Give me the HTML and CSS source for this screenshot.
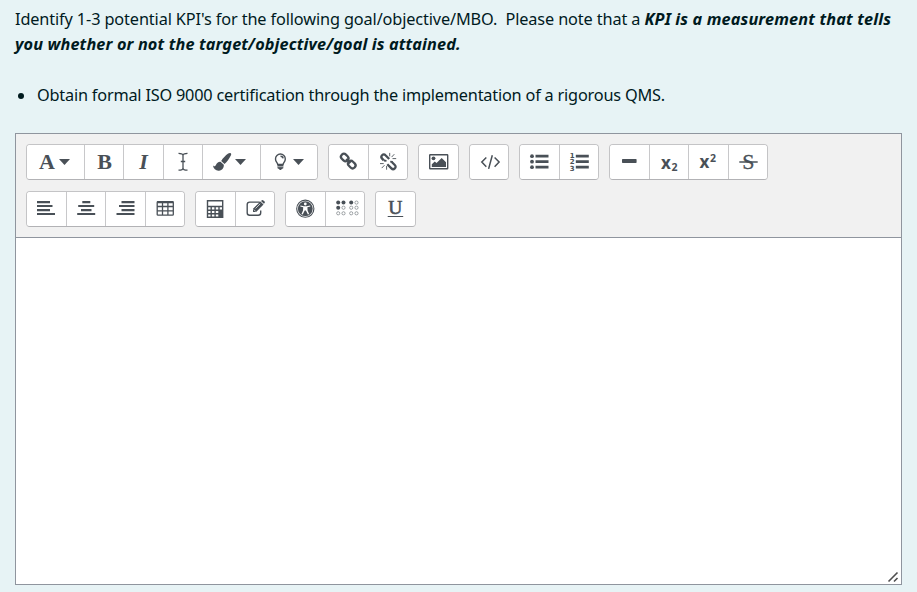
FILE: index.html
```html
<!DOCTYPE html>
<html lang="en">
<head>
<meta charset="utf-8">
<title>KPI question</title>
<link rel="stylesheet" href="styles.css">
</head>
<body>
<main class="question">
  <p class="prompt"><span class="lead">Identify 1-3 potential KPI's for the following goal/objective/MBO.&nbsp; Please note that a </span><strong class="key1">KPI is a measurement that tells</strong><br><strong class="key2">you whether or not the target/objective/goal is attained.</strong></p>
  <ul class="goals"><li><span class="goal">Obtain formal ISO 9000 certification through the implementation of a rigorous QMS.</span></li></ul>
  <section class="editor">
    <div class="toolbar">
      <div class="row">
        <div class="group">
          <button class="wide" aria-label="Paragraph styles"><svg viewBox="0 0 57 34"><text class="serif" x="20" y="24" font-size="22">A</text><path d="M32 14h11l-5.500 6z"/></svg></button>
          <button aria-label="Bold"><svg viewBox="0 0 38 34"><text class="serif" x="19.500" y="24" font-size="22">B</text></svg></button>
          <button aria-label="Italic"><svg viewBox="0 0 38 34"><text class="serif italic" x="19.500" y="24" font-size="22">I</text></svg></button>
          <button aria-label="Font size"><svg viewBox="0 0 38 34"><path class="line" stroke-width="1.300" d="M14.500 8.300c3 0 4.500.7 4.500 2.200v12.500c0 1.500-1.500 2.200-4.500 2.200M23.500 8.300c-3 0-4.500.7-4.500 2.200M23.500 25.200c-3 0-4.500-.7-4.500-2.200M16.800 16.500h4.400"/></svg></button>
          <button class="wide" aria-label="Font color"><svg viewBox="0 0 57 34"><path d="M27.700 8.200c.8.700.5 1.600 0 2.500-1.600 3.100-3.600 6.100-6.200 8.300l-3.300-2.900c1.700-3 4.300-5.500 7-7.500.9-.7 1.800-1 2.500-.4zM17.500 16.800l3.300 3c.3 3-1.500 5.600-4.800 5.900-3 .3-5.500-1.600-6-5.100 1.200.8 2.100 1.100 2.900-.7.800-1.900 2.500-3.300 4.600-3.100z"/><path d="M32 14h11l-5.500 6z"/></svg></button>
          <button class="wide" aria-label="Background color"><svg viewBox="0 0 57 34"><path class="line" stroke-width="1.400" d="M16.700 19.500c-.1-1.900-2.200-2.700-2.200-5.600a4.900 4.900 0 0 1 9.800 0c0 2.900-2.100 3.700-2.200 5.600zM19.500 11.200c1.400 0 2.500.8 2.600 2.200"/><path d="M16.500 20h5.800v3.300l-1.400.8-1 .9h-1l-1-.9-1.400-.8z"/><path stroke="#fff" stroke-width=".6" d="M16.500 21.700h5.800"/><path d="M32 14h11l-5.500 6z"/></svg></button>
        </div>
        <div class="group">
          <button aria-label="Link"><svg viewBox="0 0 38 34"><g class="line" stroke-width="2.300"><rect x="-4" y="-2.900" width="8" height="5.800" rx="2.800" transform="translate(15.700 12.500) rotate(45)"/><rect x="-4" y="-2.900" width="8" height="5.800" rx="2.800" transform="translate(22.800 19.600) rotate(45)"/><path d="M17.200 14l4.100 4.100"/></g></svg></button>
          <button aria-label="Unlink"><svg viewBox="0 0 38 34"><path class="line" stroke-width="2.300" d="M14.800 15.400l-1.700-1.800c-1.100-1.200-1.100-2.300 0-3.400s2.400-1.100 3.400 0l3.700 3.800M22.800 17l3 3c1.100 1.100 1.100 2.300 0 3.400s-2.300 1.100-3.400 0l-4.100-4.100"/><path class="line" stroke-width=".9" d="M20.700 7.900v3.400M25.300 9.200l-2.700 2.900M27.200 13.600h-3.700M11 18.600h3.700M15.500 20.200l-2.800 2.900M17.600 21v3.700"/><path class="line" stroke-width="1.800" d="M15 15.500l2.500.3M21.200 16.700l2.600.3"/></svg></button>
        </div>
        <div class="group">
          <button aria-label="Image"><svg viewBox="0 0 38 34"><rect class="line" stroke-width="1.400" x="10.700" y="9.700" width="18" height="14" rx=".5"/><circle cx="14.500" cy="13.300" r="1.900"/><path d="M12.800 22v-2.700l3-2.800 1.700 1.600 5.200-5.200 4.300 4.300V22z"/></svg></button>
        </div>
        <div class="group">
          <button aria-label="HTML"><svg viewBox="0 0 38 34"><path class="line" stroke-width="1.500" d="M16.300 12.500l-4.500 4.600 4.500 4.600M24.600 12.500l4.500 4.600-4.500 4.600M22.300 10.200l-3.700 13.700"/></svg></button>
        </div>
        <div class="group">
          <button aria-label="Unordered list"><svg viewBox="0 0 38 34"><circle cx="12" cy="11.200" r="1.900"/><circle cx="12" cy="16.700" r="1.900"/><circle cx="12" cy="22.200" r="1.900"/><path class="line" stroke-width="2.700" d="M15.500 11.200h13M15.500 16.700h13M15.500 22.200h13"/></svg></button>
          <button aria-label="Ordered list"><svg viewBox="0 0 38 34"><g class="digits"><text x="12.200" y="12.500">1</text><text x="12.200" y="19">2</text><text x="12.200" y="25.600">3</text></g><path class="line" stroke-width="2.700" d="M15.800 11.200h13M15.800 16.700h13M15.800 22.200h13"/></svg></button>
        </div>
        <div class="group">
          <button aria-label="Horizontal line"><svg viewBox="0 0 38 34"><rect x="12" y="14" width="14.600" height="4" rx=".7"/></svg></button>
          <button aria-label="Subscript"><svg viewBox="0 0 38 34"><text class="sans" x="16" y="23.500" font-size="17">x</text><text class="sans" x="24.500" y="26" font-size="10.500">2</text></svg></button>
          <button aria-label="Superscript"><svg viewBox="0 0 38 34"><text class="sans" x="15.500" y="22.700" font-size="17">x</text><text class="sans" x="24" y="17" font-size="10.500">2</text></svg></button>
          <button aria-label="Strike through"><svg viewBox="0 0 38 34"><text class="serif regular" x="19.300" y="23.700" font-size="22">S</text><path class="line" stroke-width="1.300" d="M10.300 17h18.400"/></svg></button>
        </div>
      </div>
      <div class="row">
        <div class="group">
          <button aria-label="Align left"><svg viewBox="0 0 38 34"><path class="line" stroke-width="2.200" d="M10 10.200h13M10 14h15.500M10 18.100h13M10 22h18"/></svg></button>
          <button aria-label="Center"><svg viewBox="0 0 38 34"><path class="line" stroke-width="2.200" d="M15.300 10.200h8M11.200 14h16M14 18.100h10.500M10.200 22h18"/></svg></button>
          <button aria-label="Align right"><svg viewBox="0 0 38 34"><path class="line" stroke-width="2.200" d="M15.500 10.200h13M13 14h15.500M15.500 18.100h13M10.500 22h18"/></svg></button>
          <button aria-label="Table"><svg viewBox="0 0 38 34"><path class="line" stroke-width="1.300" d="M12 9.600h14.500q.8 0 .8.800v12q0 .8-.8.800H12q-.8 0-.8-.8v-12q0-.8.800-.8zM11.200 14.500h16M11.200 18.800h16M16.500 10v13M21.900 10v13"/><path d="M11.200 9.300h16v1.900h-16z"/></svg></button>
        </div>
        <div class="group">
          <button aria-label="Equation"><svg viewBox="0 0 38 34"><path class="line" stroke-width="1.400" d="M11.500 8.700h15.200v16.600H11.500zM11.500 14.500h15.200M11.500 18.200h15.200M11.500 21.800h15.200M15.200 14v11.300M19.100 14v11.300M23 14v11.300"/><path d="M23 18.500h3.700v6.800H23z"/></svg></button>
          <button aria-label="Edit"><svg viewBox="0 0 38 34"><path class="line" stroke-width="1.400" d="M24 10.400q-.6-.3-1.300-.3h-9q-2.500 0-2.500 2.500v8.200q0 2.500 2.500 2.500h8.500q2.500 0 2.500-2.500v-2.300"/><path d="M17 20v-3.200l7.400-7.300 3.100 3-7.400 7.500zM25 9l.9-.8q.6-.5 1.200 0l1.500 1.400q.6.700 0 1.400l-.7.800z"/><path stroke="#fff" stroke-width=".7" d="M17.700 17.500l2 2M19.500 16.500l4.700-4.700"/></svg></button>
        </div>
        <div class="group">
          <button aria-label="Accessibility checker"><svg viewBox="0 0 38 34"><circle class="line" stroke-width="1.100" cx="19.300" cy="16.700" r="8.600"/><circle cx="19.300" cy="16.700" r="7.400"/><g fill="#fff"><circle cx="19.300" cy="12" r="1.400"/><path d="M14.500 13.400l3.500.8h2.600l3.500-.8.300 1.100-3 .8.200 3.100 1.500 3.500-1.200.5-2-4h-1.200l-2 4-1.200-.5 1.500-3.500.2-3.100-3-.8z"/></g></svg></button>
          <button aria-label="Screenreader helper"><svg viewBox="0 0 38 34"><g><circle cx="12.200" cy="10.600" r="2"/><circle cx="17.500" cy="10.600" r="2"/><circle cx="12.200" cy="15.700" r="2"/><circle cx="25.200" cy="10.600" r="2"/></g><g class="line" stroke-width=".5"><circle cx="17.500" cy="15.700" r="1.600"/><circle cx="12.200" cy="21.300" r="1.600"/><circle cx="17.500" cy="21.300" r="1.600"/><circle cx="30.500" cy="10.600" r="1.600"/><circle cx="25.200" cy="15.700" r="1.600"/><circle cx="30.500" cy="15.700" r="1.600"/><circle cx="25.200" cy="21.300" r="1.600"/><circle cx="30.500" cy="21.300" r="1.600"/></g></svg></button>
        </div>
        <div class="group">
          <button aria-label="Underline"><svg viewBox="0 0 38 34"><text class="serif underline" x="19.300" y="21.500" font-size="19.500">U</text><path class="line" stroke-width="1.200" d="M11.700 24.500h15.500"/></svg></button>
        </div>
      </div>
    </div>
    <div class="content" contenteditable="true"></div>
    <svg class="grip" viewBox="0 0 12 12"><path d="M1.500 10.500L10.500 1.500M7 10.500L10.500 7"/></svg>
  </section>
</main>
</body>
</html>
```
FILE: styles.css
```css
* { box-sizing: border-box; }
body {
  margin: 0;
  background: #e7f3f5;
  color: #001a1e;
  font: 16.3px/25px "Noto Sans", "Open Sans", sans-serif;
}
.question { padding: 7px 15px 7px; height: 592px; display: flex; flex-direction: column; overflow: hidden; }
.prompt { margin: 0; white-space: nowrap; height: 50px; }
.prompt strong { font-style: italic; }
.lead { letter-spacing: -0.125px; }
.key1 { letter-spacing: 0.13px; }
.key2 { letter-spacing: 0.12px; }
.goals { margin: 26px 0 0; padding: 0 0 0 22px; height: 50px; list-style: none; }
.goals li { white-space: nowrap; display: flex; align-items: center; }
.goals li::before { content: ""; width: 6px; height: 6px; border-radius: 50%; background: #001a1e; margin: 1px 13px 0 -19px; }
.goal { letter-spacing: -0.2px; }
.editor { position: relative; width: 887px; height: 452px; border: 1px solid #8f959e; background: #fff; display: flex; flex-direction: column; }
.toolbar { height: 104px; padding: 10px; background: #f1f1f1; border-bottom: 1px solid #8f959e; display: flex; flex-direction: column; gap: 11px; }
.row { display: flex; gap: 10px; height: 36px; }
.group { display: flex; border: 1px solid #c4c4c6; border-bottom-color: #b2b2b5; border-radius: 4px; background: #fff; overflow: hidden; }
button { width: 38.5px; height: 34px; padding: 0; border: 0; background: #fff; box-sizing: content-box; }
button + button { border-left: 1px solid #c8c8ca; }
button.wide { width: 56.5px; }
button svg { display: block; width: 38px; height: 34px; fill: #495057; }
button.wide svg { width: 57px; }
button .line { fill: none; stroke: #495057; }
text { text-anchor: middle; }
.serif { font-family: "Liberation Serif", serif; font-weight: 700; }
.italic { font-style: italic; }
.regular { font-weight: 400; stroke: #495057; stroke-width: .3px; }
.underline { font-weight: 400; stroke: #495057; stroke-width: .6px; }
.sans { font-family: "Open Sans", sans-serif; font-weight: 700; }
.digits { font: 700 7px "DejaVu Sans", sans-serif; }
.content { flex: 1; }
.grip { position: absolute; right: 2px; bottom: 1px; width: 12px; height: 12px; fill: none; stroke: #505050; stroke-width: 1.6; }
```
